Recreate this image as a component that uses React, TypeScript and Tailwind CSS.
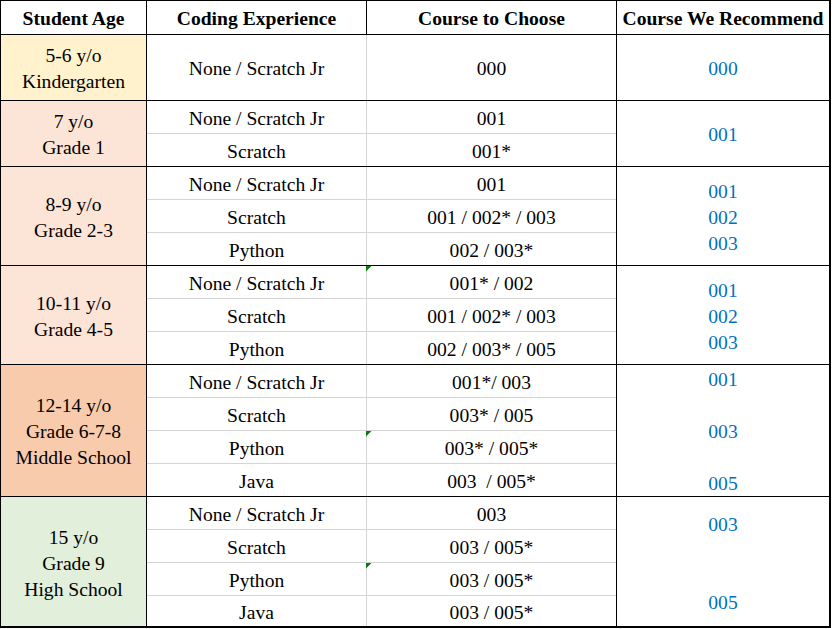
import React from "react";

type Sub = { exp: string; course: string; mark?: boolean };
type Group = {
  age: string[];
  bg: string;
  h: string;
  subs: Sub[];
  rec: string[];
};

const groups: Group[] = [
  {
    age: ["5-6 y/o", "Kindergarten"],
    bg: "bg-[#fff2cc]",
    h: "h-[66px]",
    subs: [{ exp: "None / Scratch Jr", course: "000" }],
    rec: ["000"],
  },
  {
    age: ["7 y/o", "Grade 1"],
    bg: "bg-[#fce4d6]",
    h: "h-[66px]",
    subs: [
      { exp: "None / Scratch Jr", course: "001" },
      { exp: "Scratch", course: "001*" },
    ],
    rec: ["001"],
  },
  {
    age: ["8-9 y/o", "Grade 2-3"],
    bg: "bg-[#fce4d6]",
    h: "h-[99px]",
    subs: [
      { exp: "None / Scratch Jr", course: "001" },
      { exp: "Scratch", course: "001 / 002* / 003" },
      { exp: "Python", course: "002 / 003*" },
    ],
    rec: ["001", "002", "003"],
  },
  {
    age: ["10-11 y/o", "Grade 4-5"],
    bg: "bg-[#fce4d6]",
    h: "h-[99px]",
    subs: [
      { exp: "None / Scratch Jr", course: "001* / 002", mark: true },
      { exp: "Scratch", course: "001 / 002* / 003" },
      { exp: "Python", course: "002 / 003* / 005" },
    ],
    rec: ["001", "002", "003"],
  },
  {
    age: ["12-14 y/o", "Grade 6-7-8", "Middle School"],
    bg: "bg-[#f8cbad]",
    h: "h-[132px]",
    subs: [
      { exp: "None / Scratch Jr", course: "001*/ 003" },
      { exp: "Scratch", course: "003* / 005" },
      { exp: "Python", course: "003* / 005*", mark: true },
      { exp: "Java", course: "003  / 005*" },
    ],
    rec: ["001", "\u00a0", "003", "\u00a0", "005"],
  },
  {
    age: ["15 y/o", "Grade 9", "High School"],
    bg: "bg-[#e2efda]",
    h: "h-[129px]",
    subs: [
      { exp: "None / Scratch Jr", course: "003" },
      { exp: "Scratch", course: "003 / 005*" },
      { exp: "Python", course: "003 / 005*", mark: true },
      { exp: "Java", course: "003 / 005*" },
    ],
    rec: ["003", "\u00a0", "\u00a0", "005"],
  },
];

function Mark() {
  return (
    <svg
      className="absolute left-[-1px] top-0"
      width="6"
      height="6"
      viewBox="0 0 6 6"
    >
      <polygon points="0,0 5.5,0 0,5.5" fill="#0b7a0b" />
    </svg>
  );
}

export default function App() {
  return (
    <div className="bg-white w-[832px] h-[629px] font-['Liberation_Serif',serif] text-[19.6px] leading-[26px] text-black">
      <div className="w-[831px] border-l border-t border-r-2 border-b-2 border-black">
        {/* Header */}
        <div className="flex h-[34px] border-b border-black font-bold">
          <div className="w-[146px] border-r border-black flex items-center justify-center pt-[2px]">
            Student Age
          </div>
          <div className="w-[220px] border-r border-black flex items-center justify-center pt-[2px]">
            Coding Experience
          </div>
          <div className="w-[250px] border-r border-black flex items-center justify-center pt-[2px]">
            Course to Choose
          </div>
          <div className="flex-1 flex items-center justify-center whitespace-nowrap pt-[2px]">
            Course We Recommend
          </div>
        </div>

        {groups.map((g, gi) => {
          const isLast = gi === groups.length - 1;
          return (
            <div
              key={gi}
              className={`flex ${g.h} ${isLast ? "" : "border-b border-black"}`}
            >
              <div
                className={`w-[146px] border-r border-black ${g.bg} flex flex-col items-center justify-center ${isLast ? "pt-[5px]" : "pt-[3px]"}`}
              >
                {g.age.map((l, i) => (
                  <div key={i}>{l}</div>
                ))}
              </div>
              <div className="w-[470px] border-r border-black flex flex-col">
                {g.subs.map((s, si) => {
                  const lastSub = si === g.subs.length - 1;
                  const h = lastSub
                    ? "flex-1"
                    : "h-[33px] border-b border-[#d4d4d4]";
                  return (
                    <div key={si} className={`flex ${h}`}>
                      <div className="w-[220px] border-r border-[#d4d4d4] flex items-center justify-center pt-[3px]">
                        {s.exp}
                      </div>
                      <div className="relative flex-1 flex items-center justify-center whitespace-pre pt-[3px]">
                        {s.mark && <Mark />}
                        {s.course}
                      </div>
                    </div>
                  );
                })}
              </div>
              <div
                className={`flex-1 min-h-0 flex flex-col items-center justify-center text-[#0070c0] ${isLast ? "pt-[5px]" : "pt-[3px]"}`}
              >
                {g.rec.map((r, i) => (
                  <div key={i} className="shrink-0">
                    {r}
                  </div>
                ))}
              </div>
            </div>
          );
        })}
      </div>
    </div>
  );
}
